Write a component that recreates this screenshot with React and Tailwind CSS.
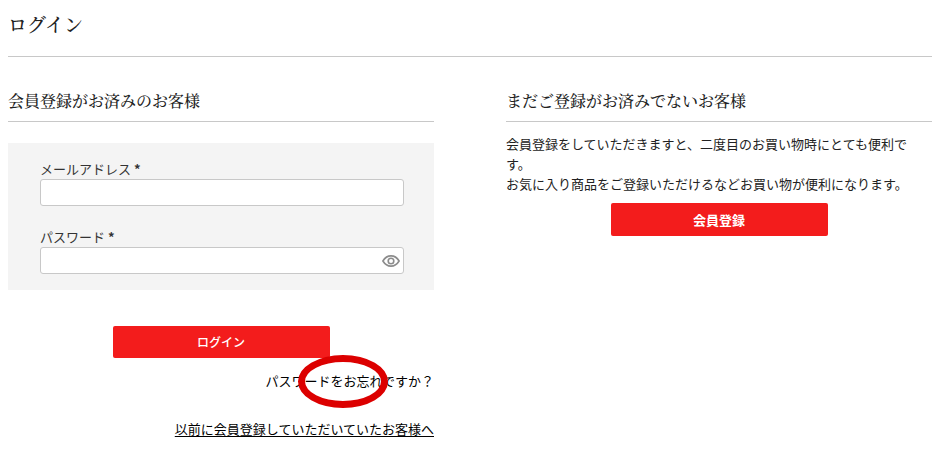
import { useState } from "react";

function SectionTitle({ children }) {
  return (
    <h2 className="border-b border-[#c8c8c8] pb-2 font-['Noto_Serif_CJK_JP','Liberation_Serif','Noto_Sans_CJK_JP',serif] text-base leading-6 font-medium text-[#222]">
      {children}
    </h2>
  );
}

function RedButton({ type = "button", className = "", children }) {
  return (
    <button
      type={type}
      className={`mx-auto block w-[217px] max-w-full rounded-[2px] bg-[#f31c1c] text-white ${className}`}
    >
      {children}
    </button>
  );
}

function EyeIcon() {
  return (
    <svg width="18" height="12" viewBox="0 0 18 12" fill="none" stroke="#8c8c8c" strokeWidth="1.6">
      <path d="M0.9 6C2.9 2.7 5.7 0.9 9 0.9S15.1 2.7 17.1 6C15.1 9.3 12.3 11.1 9 11.1S2.9 9.3 0.9 6Z" />
      <circle cx="9" cy="6" r="2.8" />
    </svg>
  );
}

function LoginForm() {
  const [showPassword, setShowPassword] = useState(false);

  return (
    <form onSubmit={(e) => e.preventDefault()}>
      <div className="mt-[21px] flex flex-col gap-[21px] bg-[#f4f4f4] py-4 pr-[30px] pl-8">
        <div>
          <label htmlFor="email" className="block text-[#333]">
            メールアドレス <span className="font-bold">*</span>
          </label>
          <input
            id="email"
            type="email"
            className="block h-[27px] w-full rounded-[3px] border border-[#c8c8c8] bg-white px-2 outline-none"
          />
        </div>
        <div>
          <label htmlFor="password" className="block text-[#333]">
            パスワード <span className="font-bold">*</span>
          </label>
          <div className="flex h-[27px] items-center rounded-[3px] border border-[#c8c8c8] bg-white">
            <input
              id="password"
              type={showPassword ? "text" : "password"}
              className="h-full min-w-0 flex-1 px-2 outline-none"
            />
            <button
              type="button"
              aria-label="パスワードを表示"
              className="mr-[3px] shrink-0"
              onClick={() => setShowPassword((prev) => !prev)}
            >
              <EyeIcon />
            </button>
          </div>
        </div>
      </div>
      <RedButton type="submit" className="mt-9 h-8 text-xs font-medium">
        ログイン
      </RedButton>
    </form>
  );
}

function App() {
  return (
    <main lang="ja" className="bg-white px-2 pb-6 font-['Noto_Sans_CJK_JP',sans-serif] text-[13px] leading-5 text-[#222]">
      <h1 className="border-b border-[#c8c8c8] pt-[10px] pb-[18px] font-['Noto_Serif_CJK_JP','Liberation_Serif','Noto_Sans_CJK_JP',serif] text-[19px] leading-7 font-medium text-[#222]">
        ログイン
      </h1>

      <div className="mt-8 grid grid-cols-2 gap-18">
        <section>
          <SectionTitle>会員登録がお済みのお客様</SectionTitle>
          <LoginForm />
          <div className="mt-[13px] flex flex-col items-end gap-7 text-black">
            <a href="#forgot" className="relative">
              パスワードをお忘れですか？
              {/* 注目してほしいリンクを囲む赤い丸 */}
              <span className="pointer-events-none absolute -top-4 right-[46px] h-[53px] w-[90px] rounded-[50%] border-7 border-[#dc0000]" />
            </a>
            <a href="#previous" className="underline underline-offset-2">
              以前に会員登録していただいていたお客様へ
            </a>
          </div>
        </section>

        <section>
          <SectionTitle>まだご登録がお済みでないお客様</SectionTitle>
          <p className="mt-3 pr-2">
            会員登録をしていただきますと、二度目のお買い物時にとても便利です。
            <br />
            お気に入り商品をご登録いただけるなどお買い物が便利になります。
          </p>
          <RedButton className="mt-[9px] h-[33px] text-[13px] font-bold">会員登録</RedButton>
        </section>
      </div>
    </main>
  );
}

export default App;
